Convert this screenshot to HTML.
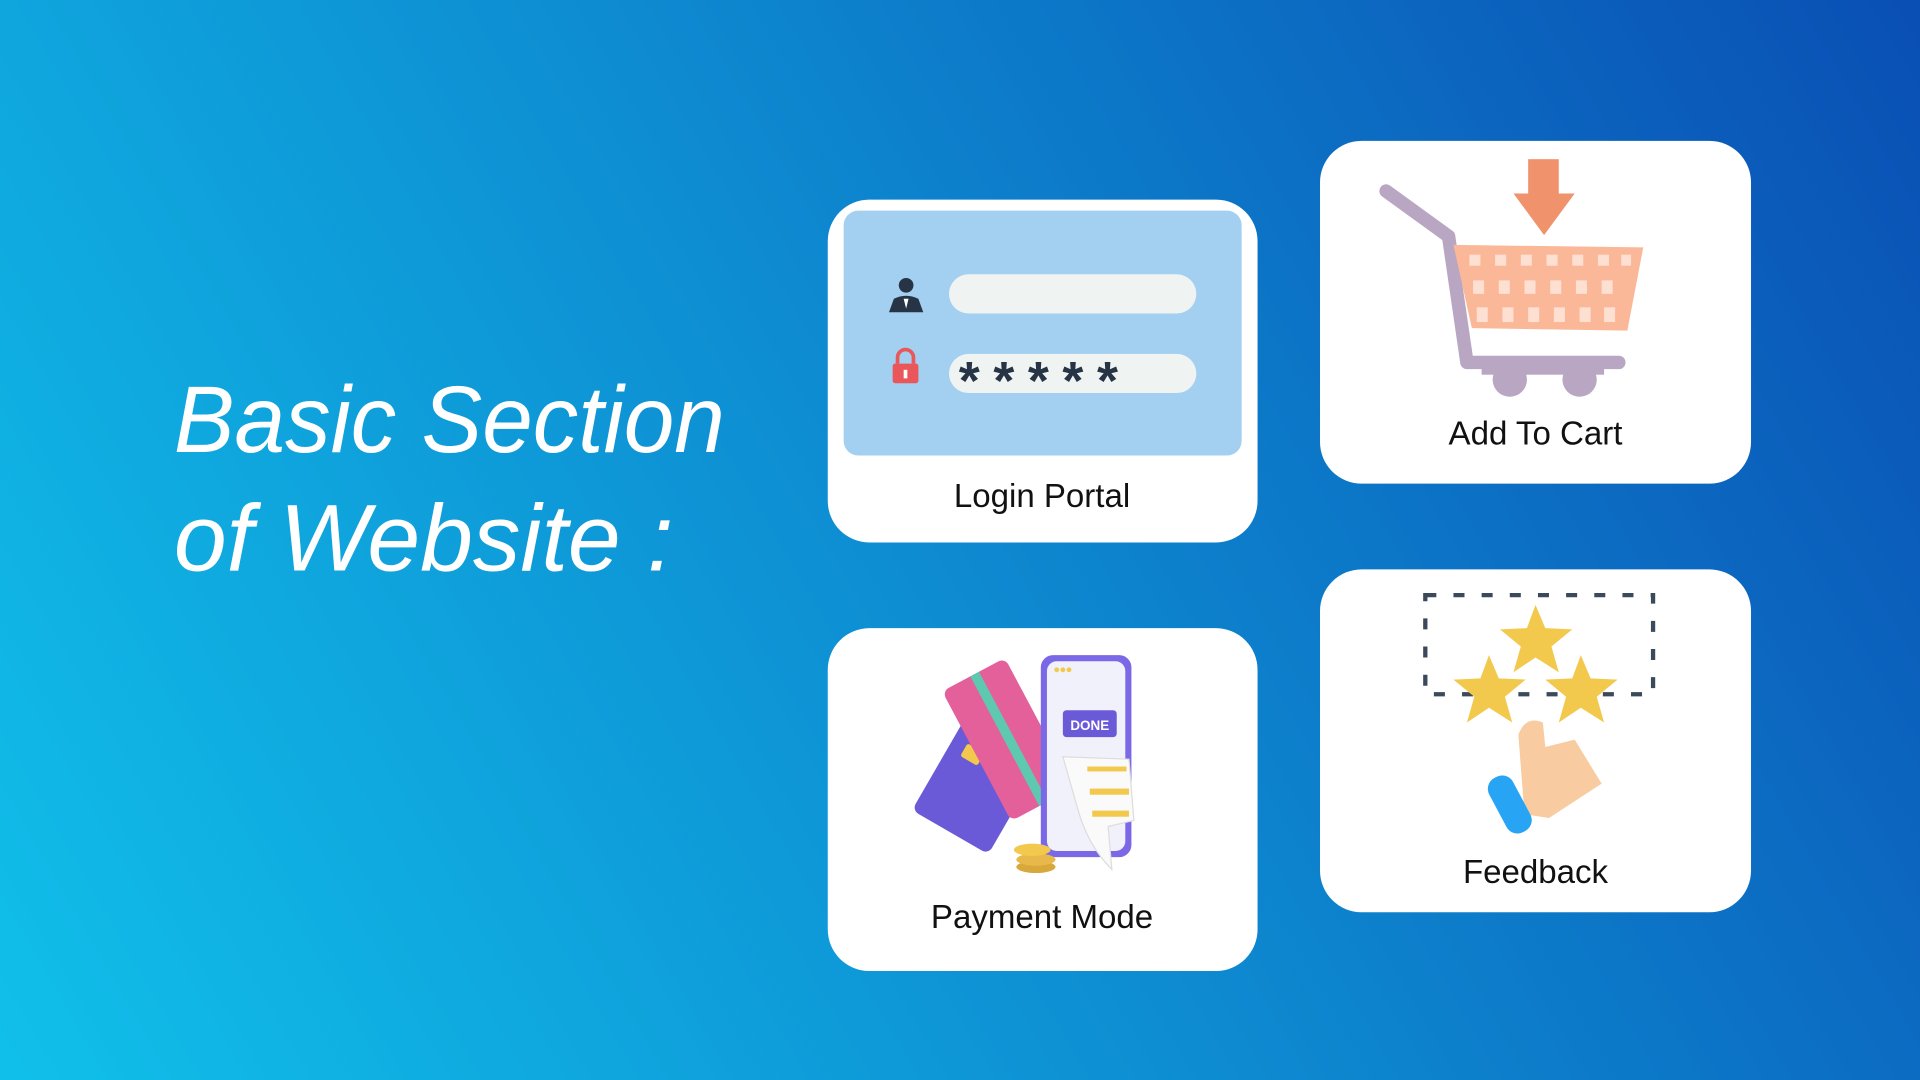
<!DOCTYPE html>
<html><head><meta charset="utf-8"><style>
html,body{margin:0;padding:0;width:1920px;height:1080px;overflow:hidden}
body{background:linear-gradient(60deg,#10c0ea 0%,#0e8fd3 45%,#0a4fb4 100%)}
svg{display:block}
text{font-family:"Liberation Sans",sans-serif}
</style></head><body>
<svg width="1920" height="1080" viewBox="0 0 1568 882" xmlns="http://www.w3.org/2000/svg">
<text x="142" y="369" font-size="77" font-style="italic" fill="#fff" textLength="450" lengthAdjust="spacingAndGlyphs">Basic Section</text>
<text x="142" y="466" font-size="77" font-style="italic" fill="#fff" textLength="408" lengthAdjust="spacingAndGlyphs">of Website :</text>

<rect x="676" y="163" width="351" height="280" rx="34" fill="#fff"/>
<rect x="1078" y="115" width="352" height="280" rx="34" fill="#fff"/>
<rect x="676" y="513" width="351" height="280" rx="34" fill="#fff"/>
<rect x="1078" y="465" width="352" height="280" rx="34" fill="#fff"/>

<rect x="689" y="172" width="325" height="200" rx="12" fill="#a3cff0"/>
<rect x="775" y="224" width="202" height="32" rx="16" fill="#eff3f2"/>
<rect x="775" y="289" width="202" height="32" rx="16" fill="#eff3f2"/>
<circle cx="740" cy="233" r="6" fill="#263445"/>
<path d="M726 255 L730 244 Q740 239 750 244 L754 255 Z" fill="#263445"/>
<path d="M738 244 L740 252 L742 244 Z" fill="#fff"/>
<path d="M733 297 v-5 a6.5 6.5 0 0 1 13 0 v5" fill="none" stroke="#e9575a" stroke-width="3"/>
<rect x="729" y="297" width="21" height="16" rx="2" fill="#e9575a"/>
<rect x="738" y="302" width="3" height="7" fill="#fff"/>
<text x="783" y="326" font-size="44" font-weight="bold" fill="#263445" textLength="130" lengthAdjust="spacing">*****</text>
<text x="851" y="414" font-size="27" text-anchor="middle" fill="#111">Login Portal</text>

<path d="M1132 156 L1183 193 L1198 296 L1322 296" fill="none" stroke="#b8a6c2" stroke-width="11" stroke-linecap="round" stroke-linejoin="round"/>
<circle cx="1233" cy="310" r="14" fill="#b8a6c2"/>
<circle cx="1290" cy="310" r="14" fill="#b8a6c2"/>
<rect x="1210" y="296" width="100" height="10" fill="#b8a6c2"/>
<path d="M1187 200 L1342 202 L1329 270 L1202 268 Z" fill="#fbb898"/>
<g fill="#fde0d2">
<rect x="1200" y="208" width="9" height="9"/><rect x="1221" y="208" width="9" height="9"/><rect x="1242" y="208" width="9" height="9"/><rect x="1263" y="208" width="9" height="9"/><rect x="1284" y="208" width="9" height="9"/><rect x="1305" y="208" width="9" height="9"/><rect x="1324" y="208" width="8" height="9"/>
<rect x="1203" y="229" width="9" height="11"/><rect x="1224" y="229" width="9" height="11"/><rect x="1245" y="229" width="9" height="11"/><rect x="1266" y="229" width="9" height="11"/><rect x="1287" y="229" width="9" height="11"/><rect x="1308" y="229" width="9" height="11"/>
<rect x="1206" y="251" width="9" height="12"/><rect x="1227" y="251" width="9" height="12"/><rect x="1248" y="251" width="9" height="12"/><rect x="1269" y="251" width="9" height="12"/><rect x="1290" y="251" width="9" height="12"/><rect x="1310" y="251" width="9" height="12"/>
</g>
<rect x="1248" y="130" width="25" height="30" fill="#f0926c"/>
<path d="M1236 158 L1286 158 L1261 192 Z" fill="#f0926c"/>
<text x="1254" y="363" font-size="27" text-anchor="middle" fill="#111">Add To Cart</text>

<g transform="rotate(30 800 630)"><rect x="768" y="575" width="72" height="110" rx="6" fill="#6b5ad8"/><rect x="780" y="615" width="16" height="12" rx="2" fill="#f2c94c"/></g>
<g transform="rotate(-28 820 600)"><rect x="792" y="545" width="58" height="120" rx="6" fill="#e3609a"/><rect x="818" y="545" width="8" height="120" fill="#5fc9b0"/></g>
<rect x="850" y="535" width="74" height="165" rx="10" fill="#7a68e6"/>
<rect x="855" y="540" width="64" height="155" rx="8" fill="#f1f1fb"/>
<circle cx="863" cy="547" r="2" fill="#f2c94c"/><circle cx="868" cy="547" r="2" fill="#f2c94c"/><circle cx="873" cy="547" r="2" fill="#f2c94c"/>
<rect x="868" y="580" width="44" height="22" rx="3" fill="#6b5ad8"/>
<text x="890" y="596" font-size="11" font-weight="bold" text-anchor="middle" fill="#fff">DONE</text>
<path d="M868 618 L922 620 L926 670 L905 675 L908 710 Q888 690 880 660 Z" fill="#fafafa" stroke="#ddd"/>
<rect x="888" y="626" width="32" height="4" fill="#f2c94c"/><rect x="890" y="644" width="32" height="5" fill="#f2c94c"/><rect x="892" y="662" width="30" height="5" fill="#f2c94c"/>
<ellipse cx="846" cy="708" rx="16" ry="5" fill="#d8a93a"/><ellipse cx="846" cy="702" rx="16" ry="5" fill="#e8b94a"/><ellipse cx="843" cy="694" rx="15" ry="5" fill="#f2c94c"/>
<text x="851" y="758" font-size="27" text-anchor="middle" fill="#111">Payment Mode</text>

<rect x="1164" y="486" width="186" height="81" fill="none" stroke="#3a4a5a" stroke-width="3.5" stroke-dasharray="9 14"/>
<g fill="#f2c94c">
<path d="M1254 494 L1262 513 L1284 514 L1267 528 L1273 549 L1254 537 L1236 549 L1242 528 L1225 514 L1247 513 Z"/>
<path d="M1216 535 L1224 554 L1246 555 L1229 569 L1235 590 L1216 578 L1198 590 L1204 569 L1187 555 L1209 554 Z"/>
<path d="M1291 535 L1299 554 L1321 555 L1304 569 L1310 590 L1291 578 L1273 590 L1279 569 L1262 555 L1284 554 Z"/>
</g>
<path d="M1240 600 Q1246 584 1260 590 L1262 610 L1286 604 L1308 640 L1265 668 L1245 665 Z" fill="#f8cba0"/>
<rect x="1222" y="632" width="22" height="50" rx="10" fill="#28a4f4" transform="rotate(-28 1233 657)"/>
<text x="1254" y="721" font-size="27" text-anchor="middle" fill="#111">Feedback</text>
</svg>
</body></html>
